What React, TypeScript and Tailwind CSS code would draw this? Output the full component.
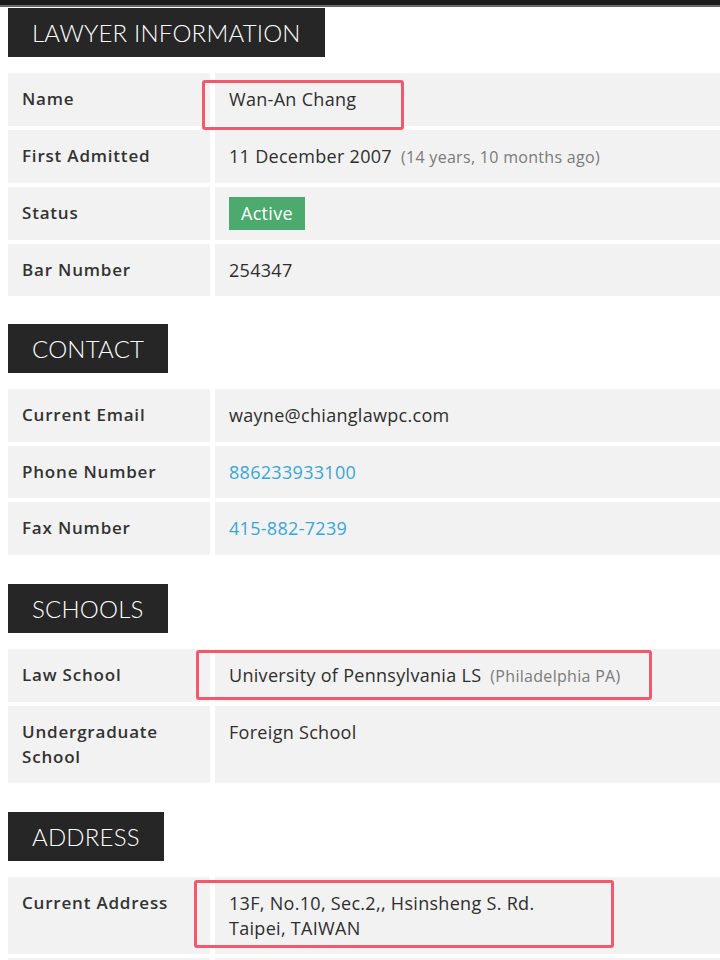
import { ReactNode } from "react";

interface RowProps {
  label: ReactNode;
  children: ReactNode;
  mark?: string;
}

function Row({ label, children, mark }: RowProps) {
  return (
    <div className="grid grid-cols-[202px_1fr] gap-[5px]">
      <div className="bg-[#f2f2f2] pl-[14px] pr-2 py-[14px] leading-[24.5px] text-[17px] font-semibold tracking-[0.8px] text-[#333]">
        {label}
      </div>
      <div className="relative bg-[#f2f2f2] pl-[14px] py-[14px] leading-[24.5px] text-[18px] tracking-[0.3px] text-[#2e2e2e]">
        {children}
        {/* red highlight drawn on the screenshot */}
        {mark && <div className={`absolute border-[3px] border-[#f2596c] rounded-[3px] ${mark}`} />}
      </div>
    </div>
  );
}

function Heading({ children }: { children: ReactNode }) {
  return (
    <div className="inline-block bg-[#262626] px-[24px] h-[49px] leading-[49px] text-white text-[24px] font-light tracking-[0.2px] font-['Lato',sans-serif]">
      {children}
    </div>
  );
}

export default function App() {
  return (
    <div className="h-[960px] bg-white font-['Open_Sans',sans-serif] overflow-hidden">
      <div className="h-[5px] bg-[#1c1c1c]" />
      <div className="h-[2px] bg-[#6a6a6a]" />

      <div className="pl-2 pt-px">
        <Heading>LAWYER INFORMATION</Heading>
        <div className="mt-4 flex flex-col gap-1">
          <Row label="Name" mark="left-[-13px] top-[7px] w-[202px] h-[50px]">Wan-An Chang</Row>
          <Row label="First Admitted">
            11 December 2007
            <span className="ml-[9px] text-[16px] text-[#7a7a7a]">(14 years, 10 months ago)</span>
          </Row>
          <Row label="Status">
            <span className="inline-block align-top -mt-[4px] -mb-[5px] bg-[#4caa6e] text-white px-3 leading-[33px]">Active</span>
          </Row>
          <Row label="Bar Number">254347</Row>
        </div>

        <div className="mt-7">
          <Heading>CONTACT</Heading>
        </div>
        <div className="mt-4 flex flex-col gap-1">
          <Row label="Current Email">wayne@chianglawpc.com</Row>
          <Row label="Phone Number">
            <span className="text-[#3aa6d6]">886233933100</span>
          </Row>
          <Row label="Fax Number">
            <span className="text-[#3aa6d6]">415-882-7239</span>
          </Row>
        </div>

        <div className="mt-[29px]">
          <Heading>SCHOOLS</Heading>
        </div>
        <div className="mt-4 flex flex-col gap-1">
          <Row label="Law School" mark="left-[-19px] top-[1px] w-[456px] h-[50px]">
            University of Pennsylvania LS
            <span className="ml-[9px] text-[16px] text-[#7a7a7a]">(Philadelphia PA)</span>
          </Row>
          <Row label={<>Undergraduate<br />School</>}>Foreign School</Row>
        </div>

        <div className="mt-[29px]">
          <Heading>ADDRESS</Heading>
        </div>
        <div className="mt-4 flex flex-col gap-1">
          <Row label="Current Address" mark="left-[-21px] top-[3px] w-[420px] h-[68px]">
            13F, No.10, Sec.2,, Hsinsheng S. Rd.
            <br />
            Taipei, TAIWAN
          </Row>
          <Row label="&nbsp;">&nbsp;</Row>
        </div>
      </div>
    </div>
  );
}
